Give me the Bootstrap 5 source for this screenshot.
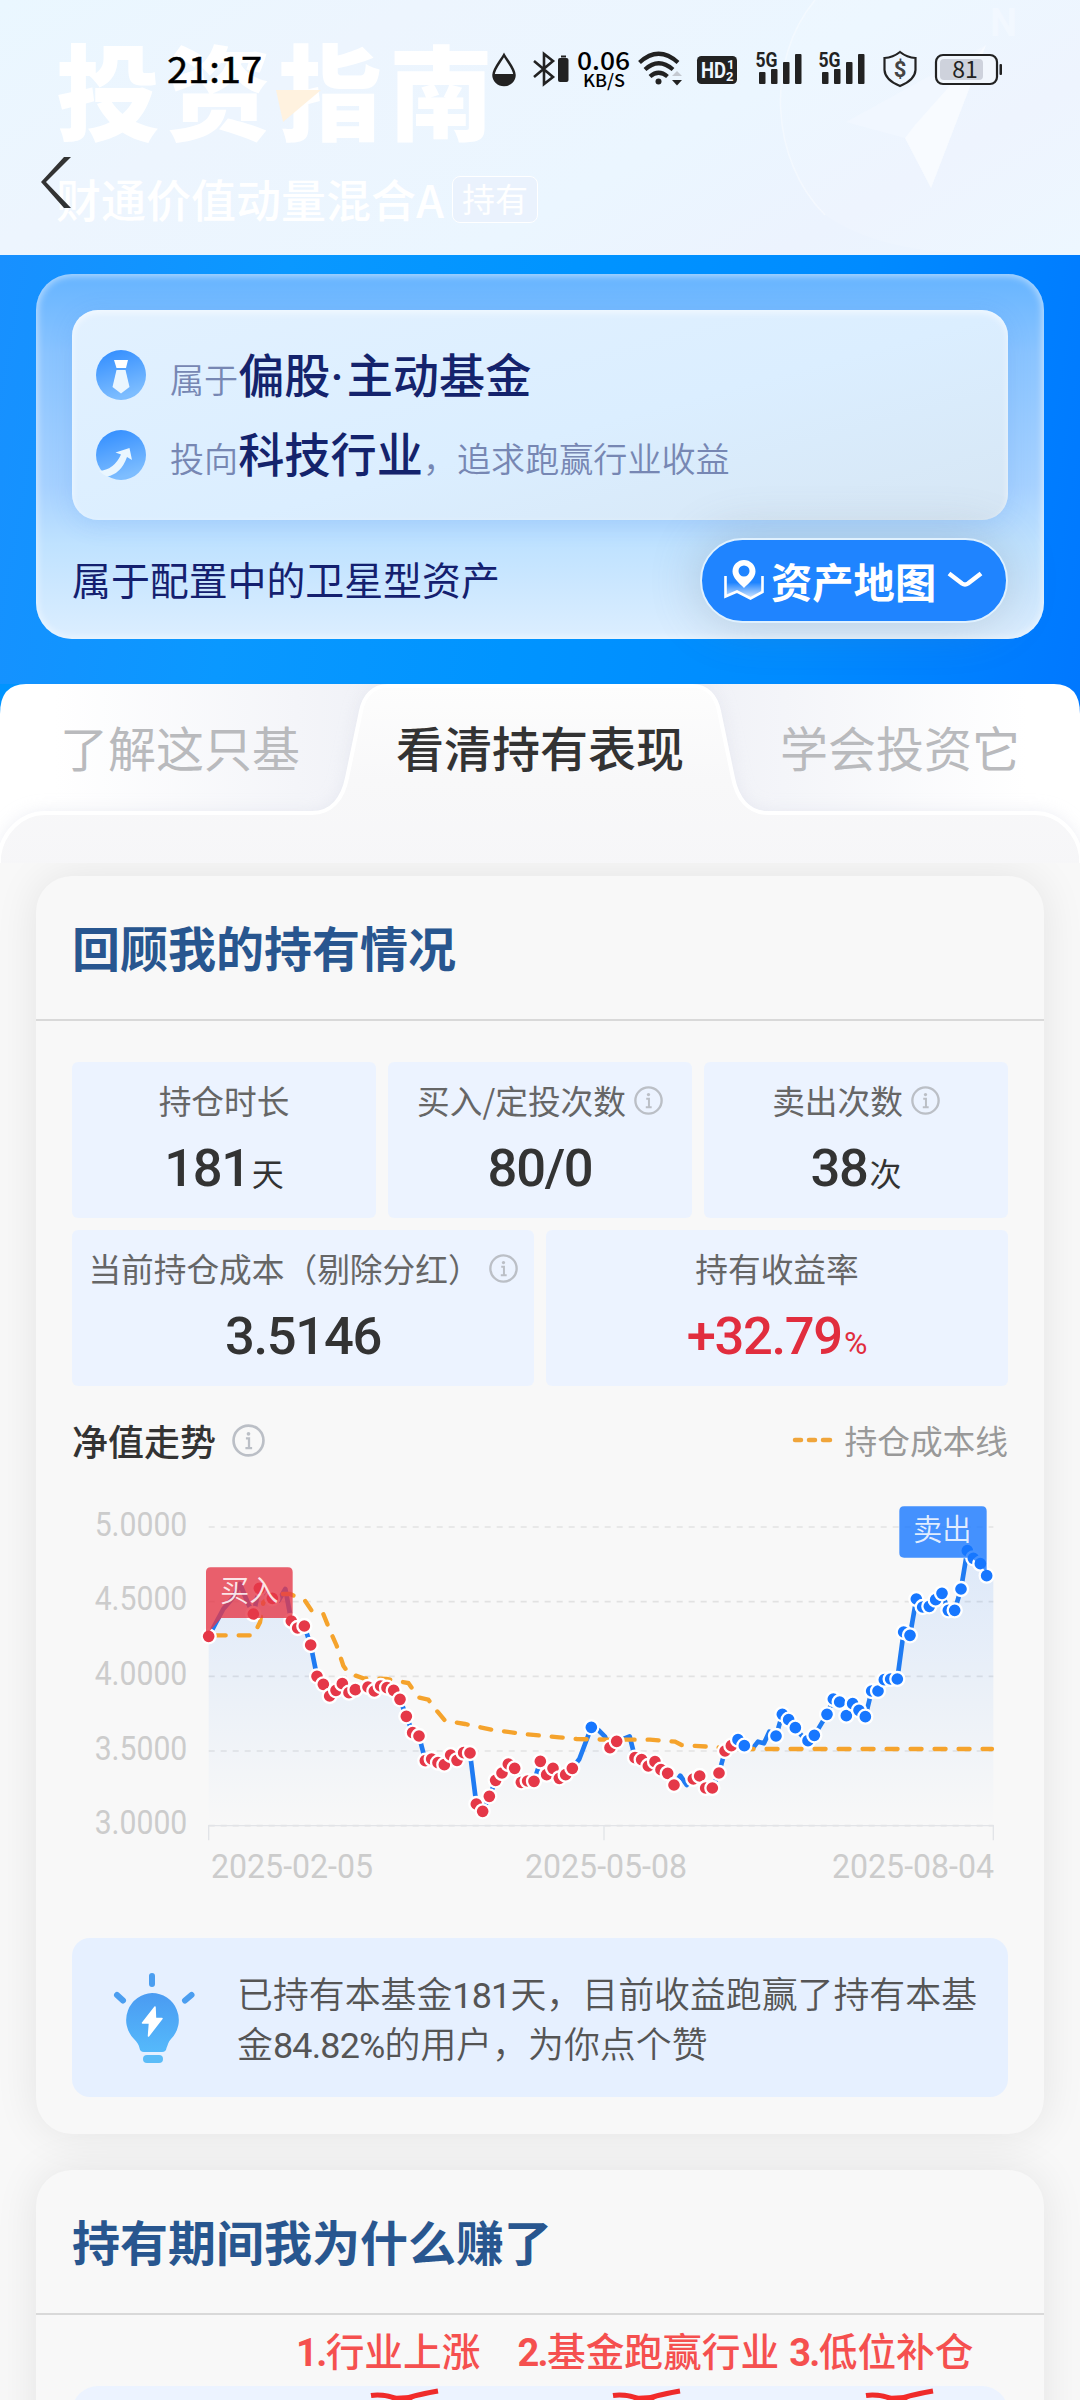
<!DOCTYPE html>
<html lang="zh-CN">
<head>
<meta charset="utf-8">
<meta name="viewport" content="width=device-width, initial-scale=1">
<title>投资指南</title>
<link href="https://cdn.jsdelivr.net/npm/bootstrap@5.3.0/dist/css/bootstrap.min.css" rel="stylesheet">
<style>
  body { font-family: "Noto Sans CJK SC", sans-serif; background: #f8f8f8; color: #333; width: 1080px; height: 2400px; overflow: hidden; }
  .num { font-family: Roboto, "Noto Sans CJK SC", sans-serif; }
  svg { display: block; flex: none; }
  svg text { font-family: "Noto Sans CJK SC", sans-serif; }
  svg .rb { font-family: Roboto, sans-serif; }

  .hero { height: 255px; background: linear-gradient(150deg, #eaf7ff 0%, #edf5fe 28%, #ebf6ff 60%, #ecf3fe 80%, #ebf6ff 100%); padding: 32px 0 0 56px; }
  .hero-title { font-size: 104px; line-height: 112px; font-weight: 900; color: #fff; letter-spacing: 7px; white-space: nowrap; }
  .hero-sub { height: 50px; margin-top: 30px; gap: 8px; color: #fff; }
  .fund-name { font-size: 45px; line-height: 50px; font-weight: 500; }
  .hold-tag { width: 86px; height: 47px; border: 1.5px solid #fff; border-radius: 8px; font-size: 33px; line-height: 43px; background: #eaf2fd; }
  .overlay { top: 0; left: 0; width: 1080px; height: 254px; }

  .blue-zone { height: 429px; padding: 19px 36px 0; background: linear-gradient(100deg, #1890ff 0%, #0a98ff 25%, #0094ff 50%, #008bff 75%, #0078ff 100%); }
  .glass { height: 365px; border-radius: 36px; padding: 36px 36px 0; background: linear-gradient(180deg, #66b4ff 0%, #8ac4ff 22%, #a6d1ff 58%, #bfe2ff 74%, #dceeff 100%); box-shadow: inset 0 0 7px 2px rgba(255,255,255,.5); }
  .glass-in { height: 210px; border-radius: 26px; padding: 32px 24px 0; background: linear-gradient(165deg, #e2f1ff 0%, #dbeeff 55%, #d6e6f4 100%); box-shadow: inset 0 3px 7px rgba(255,255,255,.6), 0 4px 24px rgba(60,130,230,.16); }
  .trait { height: 66px; margin-bottom: 13.5px; }
  .trait-text { margin-left: 24px; white-space: nowrap; color: #7787b3; font-size: 34.1px; line-height: 66px; font-weight: 350; }
  .trait-text b { font-weight: 500; font-size: 46.2px; color: #14236c; }
  .trait-text b span { font-family: Roboto, sans-serif; letter-spacing: 3px; line-height: 1px; }
  .glass-foot { height: 120px; }
  .foot-text { font-size: 38.9px; color: #14206f; position: relative; margin-top: -3px; }
  .map-btn { width: 308px; height: 85px; border-radius: 43px; background: #1f84ff; border: 2px solid #dff1ff; color: #fff; font-size: 41.3px; font-weight: 700; line-height: 78px; padding: 0 22px; gap: 7px; white-space: nowrap; flex: none; box-shadow: 0 0 50px rgba(110,120,130,.3); }

  .tabs { height: 179px; background: linear-gradient(90deg, #0094ff, #0078ff); }
  .tab-label { height: 130px; font-size: 48px; line-height: 124px; color: #b9babd; }
  .tab-on { color: #333; font-weight: 500; }

  .panel { margin: 13px 36px 0; border-radius: 36px; background: #f8f8f8; box-shadow: 0 0 44px rgba(0,0,0,.085); }
  .panel-one { height: 1258px; }
  .panel-two { margin-top: 36px; height: 300px; }
  .panel-head { height: 145px; border-bottom: 2px solid #d9d9d9; padding: 0 36px; font-size: 48px; font-weight: 700; line-height: 140px; color: #28568f; }
  .stats { padding: 41px 36px 0; gap: 12px; }
  .stat-row { gap: 12px; }
  .stat { height: 156px; border-radius: 6px; background: #ecf3ff; flex: 1 1 0; min-width: 0; padding-top: 15px; }
  .stat-label { height: 46px; font-size: 32.7px; color: #666; gap: 8px; white-space: nowrap; line-height: 46px; }
  .stat-value { height: 74px; line-height: 74px; font-size: 52.5px; font-weight: 500; font-family: Roboto, sans-serif; letter-spacing: -1.3px; color: #333; white-space: nowrap; margin-top: 8px; }
  .stat-value small { font-family: Roboto, "Noto Sans CJK SC", sans-serif; font-size: 32px; font-weight: 400; letter-spacing: 0; line-height: 1px; margin-left: 2px; }
  .stat-value.rise { color: #e12d3e; }
  .chart-head { height: 56px; margin-top: 26px; padding: 0 36px; }
  .chart-name { font-size: 36px; font-weight: 500; }
  .legend-text { font-size: 32.7px; color: #999; }
  .tip { margin: 48px 36px 0; height: 159px; border-radius: 18px; background: #e6f0ff; padding-left: 37px; }
  .tip-text { font-size: 35.9px; line-height: 50px; color: #555; margin-left: 38px; white-space: nowrap; font-weight: 350; margin-top: -1px; }
  .tip-text span { letter-spacing: -.8px; font-weight: 400; line-height: 1px; }
  .marks { height: 71px; color: #f5504f; font-size: 38.7px; font-weight: 500; line-height: 68px; padding-left: 260px; white-space: nowrap; }
  .marks b { font-family: Roboto, sans-serif; font-weight: 700; font-size: 38px; letter-spacing: -1.6px; }
  .marks .second { margin-left: 37px; }
  .marks .third { margin-left: 10px; }
  .sub-box { margin: 0 36px; height: 80px; border-radius: 26px 26px 0 0; background: #ecf3ff; }
</style>
</head>
<body>
<header class="hero position-relative">
  <svg class="position-absolute top-0 end-0" width="360" height="254" viewBox="720 0 360 254">
    <path d="M815 0C765 60 770 160 825 215Q880 254 985 254L1080 254V0Z" fill="#fff" opacity=".1"/>
    <path d="M815 0C765 60 770 160 825 215" fill="none" stroke="#fff" stroke-width="1.500" opacity=".4"/>
    <path d="M846 122L986 45L931 188L905 138Z" fill="#f1f7ff"/>
    <path d="M986 45L931 188L905 138L915 125Z" fill="#f8fbff"/>
    <text class="rb" x="990" y="36" font-size="38" font-weight="700" fill="#f2f8ff">N</text>
  </svg>
  <div class="hero-title">投资指南</div>
  <div class="hero-sub d-flex align-items-center">
    <div class="fund-name">财通价值动量混合A</div>
    <div class="hold-tag text-center">持有</div>
  </div>
  <div class="overlay position-absolute">
    <svg width="1080" height="254" viewBox="0 0 1080 254">
      <path d="M276 90L321 90L283 122Z" fill="#fff2df"/>
      <path d="M64 157H71L46 182L71 208H64L41 182Z" fill="#333"/>
      <text x="167" y="83" font-size="36" font-weight="400" fill="#000" stroke="#000" stroke-width=".500" textLength="95" lengthAdjust="spacingAndGlyphs">21:17</text>
      <path d="M504 55C500 62 493.500 69 493.500 75A10.500 10 0 0 0 514.500 75C514.500 69 508 62 504 55Z" fill="none" stroke="#222" stroke-width="2.500"/>
      <path d="M493 74H515A11 11 0 0 1 493 74Z" fill="#222"/>
      <path d="M534 61L553 77L544 84V54L553 61L534 77" fill="none" stroke="#222" stroke-width="2.600"/>
      <rect x="558" y="58" width="10.500" height="24" rx="2" fill="#222"/><rect x="561" y="55.500" width="5" height="2" fill="#222"/>
      <text x="577" y="70" font-size="24.500" font-weight="500" fill="#000" textLength="53" lengthAdjust="spacingAndGlyphs">0.06</text>
      <text x="583" y="87" font-size="17.500" font-weight="500" fill="#000" textLength="42" lengthAdjust="spacingAndGlyphs">KB/S</text>
      <g fill="none" stroke="#222" stroke-width="4.200">
        <path d="M639.500 62.500Q658.500 45 678 62.500"/><path d="M645 69.500Q658.500 57 673 69.500"/><path d="M650 76.500Q658.500 69 667.500 76.500"/>
      </g>
      <circle cx="658.500" cy="81.500" r="3" fill="#222"/>
      <path d="M672 76L677 71L682 76Z" fill="#c4c9d1"/><path d="M672 80L677 85.500L682 80Z" fill="#222"/>
      <rect x="697" y="56" width="40" height="28" rx="4.500" fill="#222"/>
      <text class="rb" x="701" y="78" font-size="22" font-weight="700" fill="#eef6ff" textLength="25" lengthAdjust="spacingAndGlyphs">HD</text>
      <text class="rb" x="727" y="69" font-size="13" font-weight="700" fill="#eef6ff">1</text>
      <text class="rb" x="726" y="81" font-size="13" font-weight="700" fill="#eef6ff">2</text>
      <g id="sig" fill="#222">
        <text class="rb" x="755.500" y="67" font-size="20.500" font-weight="700" textLength="22" lengthAdjust="spacingAndGlyphs">5G</text>
        <rect x="759" y="72" width="6.500" height="12" rx="1"/><rect x="771" y="69" width="6.500" height="15" rx="1"/>
        <rect x="783" y="62" width="6.500" height="22" rx="1"/><rect x="795" y="54" width="6.500" height="30" rx="1"/>
      </g>
      <use href="#sig" x="63"/>
      <path d="M900 52Q907 57.500 915.500 58V70Q915 80 900 86Q885 80 884.500 70V58Q893 57.500 900 52Z" fill="none" stroke="#222" stroke-width="2.200"/>
      <text class="rb" x="900" y="77" font-size="22" font-weight="700" fill="#444" text-anchor="middle">$</text>
      <rect x="936" y="55" width="61" height="29" rx="7" fill="#f2f7fd" stroke="#222" stroke-width="2.200"/>
      <rect x="940" y="59" width="43" height="21" rx="4" fill="#ced2dc"/>
      <rect x="999.500" y="64" width="2.500" height="11" rx="1" fill="#222"/>
      <text x="965" y="78" font-size="23" fill="#222" text-anchor="middle">81</text>
    </svg>
  </div>
</header>

<section class="blue-zone">
  <div class="glass">
    <div class="glass-in">
      <div class="trait d-flex align-items-center">
        <svg width="50" height="50" viewBox="0 0 50 50">
          <defs><linearGradient id="disc" x1="0" y1="0" x2="0.300" y2="1"><stop stop-color="#2e8bff"/><stop offset="1" stop-color="#7dbdff"/></linearGradient></defs>
          <circle cx="25" cy="25" r="25" fill="url(#disc)"/>
          <path d="M18 10H32L30 18H20.500Z" fill="#fff"/><path d="M20.500 20H29.500L33.500 37L25 43.500L16.500 37Z" fill="#eaf6ff"/>
        </svg>
        <div class="trait-text">属于<b>偏股<span>·</span>主动基金</b></div>
      </div>
      <div class="trait d-flex align-items-center">
        <svg width="50" height="50" viewBox="0 0 50 50">
          <circle cx="25" cy="25" r="25" fill="url(#disc)"/>
          <path d="M3 41Q18 40 25 24.500L19.500 22.500L33.500 18L36 30L31 27Q25 44 11 46.500Q6 44 3 41Z" fill="#e9f6ff"/>
        </svg>
        <div class="trait-text">投向<b>科技行业</b>，追求跑赢行业收益</div>
      </div>
    </div>
    <div class="glass-foot d-flex justify-content-between align-items-center">
      <div class="foot-text">属于配置中的卫星型资产</div>
      <div class="map-btn d-flex align-items-center">
        <svg width="40" height="42" viewBox="0 0 40 42">
          <defs><linearGradient id="fold" x1="0" y1="0" x2="0" y2="1"><stop offset=".3" stop-color="#fff" stop-opacity="0"/><stop offset="1" stop-color="#fff" stop-opacity=".8"/></linearGradient></defs>
          <path d="M1.500 17V37L13 32L26 39L38.500 32V17Z" fill="url(#fold)"/>
          <path d="M1.500 17V37.500L13 32.500L26.500 39.500L38.500 33V17" fill="none" stroke="#fff" stroke-width="2.600"/>
          <path fill-rule="evenodd" d="M20 1A11.500 11.500 0 0 1 31.500 12.500C31.500 19 25 24 20 29C15 24 8.500 19 8.500 12.500A11.500 11.500 0 0 1 20 1ZM20 6.500A5.500 5.500 0 1 0 20 17.500A5.500 5.500 0 1 0 20 6.500Z" fill="#fff"/>
        </svg>
        <span>资产地图</span>
        <svg width="36" height="20" viewBox="0 0 36 20" class="ms-1"><path d="M2 3.500L15 13.500Q18 15.500 21 13.500L34 3.500" fill="none" stroke="#fff" stroke-width="4.500"/></svg>
      </div>
    </div>
  </div>
</section>

<nav class="tabs position-relative">
  <svg class="position-absolute top-0 start-0" width="1080" height="179" viewBox="0 0 1080 179">
    <defs>
      <linearGradient id="lt"><stop offset=".1" stop-color="#fff"/><stop offset="1" stop-color="#e9ebf3"/></linearGradient>
      <linearGradient id="rt"><stop offset="0" stop-color="#e9ebf3"/><stop offset=".9" stop-color="#fff"/></linearGradient>
      <linearGradient id="act" x1="0" y1="0" x2="0" y2="1"><stop stop-color="#fdfdfd"/><stop offset=".5" stop-color="#f8f8f9"/><stop offset="1" stop-color="#f6f6f8"/></linearGradient>
      <filter id="soft" x="-5%" y="-20%" width="110%" height="140%"><feGaussianBlur stdDeviation="9"/></filter>
      <path id="shape" d="M-1 190V172C2 150 20 129 45 129H312C332 129 343 114 347 94L361 27C364 12 373 2 388 2H692C707 2 716 12 719 27L733 94C737 114 748 129 768 129H1035C1060 129 1078 150 1081 172V190Z"/>
      <clipPath id="cut"><path d="M0 30Q0 0 26 0H1054Q1080 0 1080 30V179H0Z"/></clipPath>
    </defs>
    <g clip-path="url(#cut)">
      <rect width="540" height="179" fill="url(#lt)"/><rect x="540" width="540" height="179" fill="url(#rt)"/>
      <use href="#shape" fill="#d9dce8" opacity=".55" filter="url(#soft)"/>
      <use href="#shape" fill="url(#act)" stroke="#fff" stroke-width="4"/>
    </g>
  </svg>
  <div class="row g-0 position-relative text-center">
    <div class="col-4 tab-label">了解这只基</div>
    <div class="col-4 tab-label tab-on">看清持有表现</div>
    <div class="col-4 tab-label">学会投资它</div>
  </div>
</nav>

<main>
  <section class="panel panel-one">
    <div class="panel-head">回顾我的持有情况</div>
    <div class="stats d-flex flex-column">
      <div class="stat-row d-flex">
        <div class="stat">
          <div class="stat-label d-flex justify-content-center align-items-center">持仓时长</div>
          <div class="stat-value text-center">181<small>天</small></div>
        </div>
        <div class="stat">
          <div class="stat-label d-flex justify-content-center align-items-center">买入/定投次数
            <svg width="29" height="29" viewBox="0 0 32 32"><g id="info"><circle cx="16" cy="16" r="14.500" fill="none" stroke="#bbbfc6" stroke-width="2.600"/><circle cx="16" cy="9.500" r="1.800" fill="#bbbfc6"/><path d="M13.500 14H16.500V23.500M13 23.500H19.500" fill="none" stroke="#bbbfc6" stroke-width="2.200"/></g></svg></div>
          <div class="stat-value text-center">80/0</div>
        </div>
        <div class="stat">
          <div class="stat-label d-flex justify-content-center align-items-center">卖出次数
            <svg width="29" height="29" viewBox="0 0 32 32"><use href="#info"/></svg></div>
          <div class="stat-value text-center">38<small>次</small></div>
        </div>
      </div>
      <div class="stat-row d-flex">
        <div class="stat">
          <div class="stat-label d-flex justify-content-center align-items-center">当前持仓成本（剔除分红）
            <svg width="29" height="29" viewBox="0 0 32 32"><use href="#info"/></svg></div>
          <div class="stat-value text-center">3.5146</div>
        </div>
        <div class="stat">
          <div class="stat-label d-flex justify-content-center align-items-center">持有收益率</div>
          <div class="stat-value text-center rise">+32.79<small>%</small></div>
        </div>
      </div>
    </div>
    <div class="chart-head d-flex align-items-center justify-content-between">
      <div class="d-flex align-items-center gap-3"><span class="chart-name">净值走势</span>
        <svg width="33" height="33" viewBox="0 0 32 32"><use href="#info"/></svg></div>
      <div class="d-flex align-items-center">
        <svg width="53" height="8" viewBox="0 0 53 8"><path d="M3 4H9M17 4H23M31 4H38" stroke="#f0a53a" stroke-width="4.500" stroke-linecap="round"/></svg>
        <span class="legend-text">持仓成本线</span>
      </div>
    </div>
    <svg id="navChart" width="1008" height="422" viewBox="-72 -3 3024 1266">
      <defs><linearGradient id="fade" x1="0" y1="0" x2="0" y2="1"><stop stop-color="#1777ff" stop-opacity=".12"/><stop offset="1" stop-color="#1777ff" stop-opacity="0"/></linearGradient></defs>
    </svg>
    <div class="tip d-flex align-items-center">
      <svg width="90" height="100" viewBox="0 0 90 100">
        <defs><linearGradient id="bulb" x1="0" y1="0" x2="0" y2="1"><stop stop-color="#4a9bf2"/><stop offset="1" stop-color="#55b9fb"/></linearGradient></defs>
        <path d="M43 8V16M8 27L14 32.500M76 32.500L82.500 27" stroke="#4b9ef0" stroke-width="6" stroke-linecap="round"/>
        <path d="M43 25A27 27 0 0 1 62 71C59 74 59 77 57.500 80Q57 84 53 84H35Q31 84 30.500 80C30 77 28 74 25 71A27 27 0 0 1 43 25Z" fill="url(#bulb)"/>
        <rect x="34" y="87" width="20" height="8" rx="4" fill="#5bbcf8"/>
        <path d="M46 39L33.500 55H40.500L39.500 68L53 50.500H46.500Z" fill="#fff" stroke="#fff" stroke-width="1.500" stroke-linejoin="round"/>
      </svg>
      <div class="tip-text">已持有本基金<span class="num">181</span>天，目前收益跑赢了持有本基<br>金<span class="num">84.82%</span>的用户，为你点个赞</div>
    </div>
  </section>

  <section class="panel panel-two">
    <div class="panel-head">持有期间我为什么赚了</div>
    <div class="marks d-flex">
      <span><b>1.</b>行业上涨</span><span class="second"><b>2.</b>基金跑赢行业</span><span class="third"><b>3.</b>低位补仓</span>
    </div>
    <div class="sub-box">
      <svg width="936" height="14" viewBox="72 2386 936 14">
        <g id="arrow"><path d="M371 2395.500Q384 2393.500 401 2400Q415 2395 438 2391" fill="none" stroke="#ee2b2b" stroke-width="5"/><path d="M388 2397Q402 2394 418 2396L410 2401H394Z" fill="#f52a2a"/></g>
        <use href="#arrow" x="242"/><use href="#arrow" x="495"/>
      </svg>
    </div>
  </section>
</main>

<script src="https://cdn.jsdelivr.net/npm/bootstrap@5.3.0/dist/js/bootstrap.bundle.min.js"></script>
<script>
  // Each entry: x, y, marker colour (r = buy, b = sell, '' = no trade that day)
  const days = `446,502,r 490,420, 520,385, 540,345, 565,405, 580,435,r 598,358,r 637,388,r 656,395, 676,360, 694,456,r 713,477,r 733,471,r 752,528,r 771,622,r 790,646,r 809,681,r 828,664,r 847,644,r 867,671,r 886,662,r 924,654,r 943,666,r 962,651,r 981,656,r 1001,664,r 1020,691,r 1039,742,r 1058,791,r 1077,801,r 1096,875,r 1115,870,r 1134,881,r 1153,887,r 1172,858,r 1191,874,r 1211,851,r 1230,852,r 1249,1005,r 1268,1027,r 1288,982,r 1307,934,r 1326,912,r 1345,885,r 1364,898,r 1384,940,r 1403,936,r 1422,937,r 1441,877,r 1460,917,r 1479,898,r 1498,928,r 1517,917,r 1537,898,r 1558,870, 1594,775,b 1615,783, 1635,803, 1650,836,r 1670,817,r 1690,810, 1709,802, 1725,866,r 1745,872,r 1765,891,r 1785,878,r 1803,902,r 1823,913,r 1842,948,r 1861,920, 1880,948, 1900,930,r 1919,921,r 1937,957,r 1957,957,r 1977,912,r 1995,846,r 2014,830,r 2034,812,b 2053,830,b 2078,838, 2094,818, 2112,823, 2128,788, 2148,801,b 2167,736,b 2186,752,b 2206,776,b 2225,800, 2244,815,b 2263,799,b 2301,736,b 2320,690,b 2339,699,b 2359,740,b 2378,704,b 2397,724,b 2416,743,b 2435,666,b 2454,666,b 2473,632,b 2492,630,b 2512,630,b 2531,489,b 2550,499,b 2569,390,b 2588,414,b 2608,412,b 2627,392,b 2646,373,b 2665,424,b 2684,424,b 2703,360,b 2722,245,b 2740,268,b 2761,284,b 2780,320,b`
    .split(' ').map(s => s.split(','));
  const cost = '446,499 580,499 600,460 610,400 640,375 690,375 735,395 755,425 790,435 810,485 830,530 850,590 865,612 910,628 980,630 1045,642 1075,685 1105,692 1130,725 1155,755 1215,765 1300,783 1400,796 1498,805 1550,810 1640,812 1770,812 1845,818 1865,828 1960,834 2020,840 2796,840';
  const pts = days.map(d => d[0] + ',' + d[1]).join(' ');
  let out = '';
  [['5.0000', 174], ['4.5000', 398], ['4.0000', 622], ['3.5000', 846], ['3.0000', 1070]].forEach(([label, y]) => {
    out += `<path d="M446 ${y}H2800" stroke="#e2e2e2" stroke-width="5" stroke-dasharray="18 18"/>
      <text class="rb" x="104" y="${y + 26}" font-size="97" fill="#ccc" textLength="278" lengthAdjust="spacingAndGlyphs">${label}</text>`;
  });
  out += '<path d="M446 1114V1070H2800V1114M1632 1070V1114" fill="none" stroke="#e2e4e8" stroke-width="4"/>';
  [['2025-02-05', 453], ['2025-05-08', 1395], ['2025-08-04', 2316]].forEach(([label, x]) => {
    out += `<text class="rb" x="${x}" y="1226" font-size="97" fill="#ccc" textLength="486" lengthAdjust="spacingAndGlyphs">${label}</text>`;
  });
  out += `<polygon points="446,1070 ${pts} 2800,320 2800,1070" fill="url(#fade)"/>
    <polyline points="${pts}" fill="none" stroke="#1f7bf2" stroke-width="14" stroke-linejoin="round"/>
    <polyline points="${cost}" fill="none" stroke="#f5a32c" stroke-width="13" stroke-linecap="round" stroke-dasharray="33 39" stroke-dashoffset="54"/>`;
  days.filter(d => d[2]).forEach(d => {
    out += `<circle cx="${d[0]}" cy="${d[1]}" r="21" fill="${d[2] === 'r' ? '#e53848' : '#1777ff'}" stroke="#fff" stroke-width="7"/>`;
  });
  out += `<path d="M438 500V309Q438 295 452 295H684Q698 295 698 309V433Q698 447 684 447H484L446 490Z" fill="#e53848" fill-opacity=".8"/>
    <text x="480" y="397" font-size="88" font-weight="350" fill="#fff" fill-opacity=".85">买入</text>
    <path d="M1092 112H1326Q1340 112 1340 126V310L1296 266H1092Q1078 266 1078 252V126Q1078 112 1092 112Z" transform="translate(1440)" fill="#1777ff" fill-opacity=".8"/>
    <text x="2559" y="214" font-size="88" font-weight="350" fill="#fff" fill-opacity=".85">卖出</text>`;
  document.getElementById('navChart').insertAdjacentHTML('beforeend', out);
</script>
</body>
</html>
